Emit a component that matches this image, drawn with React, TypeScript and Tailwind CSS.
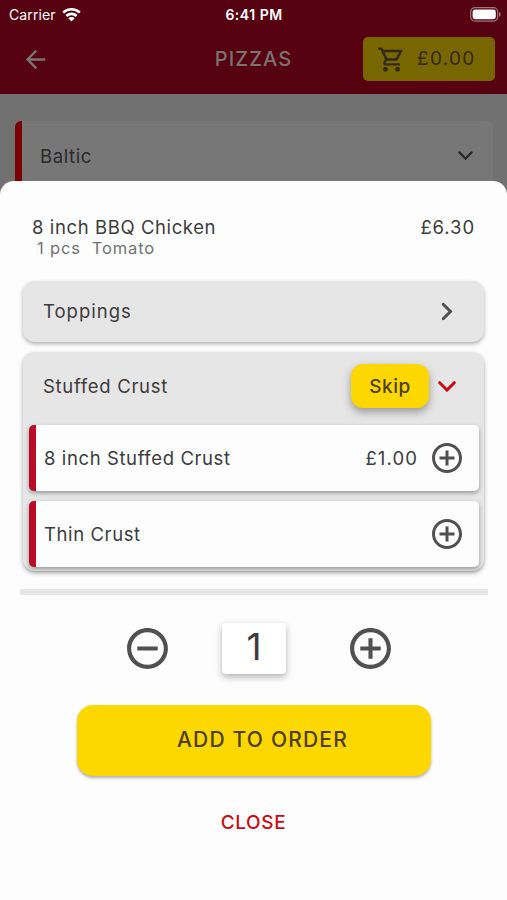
import { useState } from 'react';
import {
  MdArrowBack,
  MdOutlineShoppingCart,
  MdAddCircleOutline,
  MdRemoveCircleOutline,
} from 'react-icons/md';

interface CrustOption {
  name:  string;
  price: string | null;
}

const CRUSTS: CrustOption[] = [
  { name: '8 inch Stuffed Crust', price: '£1.00' },
  { name: 'Thin Crust',           price: null },
];

function StatusBar() {
  return (
    <div className="grid h-7 grid-cols-[1fr_auto_1fr] items-center pl-[9px] pr-[6px] text-white">
      <div className="flex items-center gap-1.5">
        <span className="text-[14px] tracking-[0.1px]">Carrier</span>
        <svg width="19" height="15" viewBox="0 0 19 15" fill="none" stroke="currentColor" strokeWidth="2.6">
          <path d="M1.2 5.6a11.9 11.9 0 0 1 16.6 0" />
          <path d="M4.4 9a7.3 7.3 0 0 1 10.2 0" />
          <path d="M9.5 14.4 6.3 11.2a4.6 4.6 0 0 1 6.4 0z" fill="currentColor" stroke="none" />
        </svg>
      </div>
      <span className="pr-[2px] text-[14px] font-semibold tracking-[0.5px]">6:41 PM</span>
      <svg className="justify-self-end" width="31" height="15" viewBox="0 0 31 15">
        <rect x="0.7" y="0.7" width="27" height="13.4" rx="4.2" fill="none" stroke="#fff" strokeOpacity="0.45" strokeWidth="1.2" />
        <rect x="2.6" y="2.6" width="23.2" height="9.6" rx="2.4" fill="#fff" />
        <path d="M29 5v5c1.1-.4 1.7-1.4 1.7-2.5S30.1 5.4 29 5z" fill="#fff" fillOpacity="0.45" />
      </svg>
    </div>
  );
}

function Chevron({ className }: { className: string }) {
  return (
    <svg className={className} viewBox="0 0 18 11" fill="none" stroke="currentColor" strokeLinecap="round">
      <path d="M1.7 1.7 9 9 16.3 1.7" />
    </svg>
  );
}

export default function App() {
  const [qty, setQty] = useState(1);

  return (
    <div className="flex h-[900px] w-[507px] flex-col overflow-hidden bg-[#717171] font-['Inter','Liberation_Sans',sans-serif] text-[#3c3c3c]">
      {/* header */}
      <header className="h-[94px] shrink-0 bg-[#560210]">
        <StatusBar />
        <div className="grid grid-cols-[1fr_auto_1fr] items-center pl-[21px] pr-3 pt-[9px]">
          <MdArrowBack className="size-[29px] text-[#7b7370]" />
          <h1 className="pr-[9px] text-[20px] font-medium tracking-[1.1px] text-[#7b7370]">PIZZAS</h1>
          <div className="flex h-[44px] w-[132px] items-center gap-[11px] justify-self-end rounded-[5px] bg-[#786700] pl-[14px] text-[#33291a]">
            <MdOutlineShoppingCart className="size-[29px]" />
            <span className="pt-px text-[19px] tracking-[1.3px]">£0.00</span>
          </div>
        </div>
      </header>

      {/* menu list behind the sheet */}
      <div className="h-[87px] shrink-0 pl-[15px] pr-[14px] pt-[27px]">
        <div className="flex h-[70px] items-center justify-between rounded-[6px] border-l-[7px] border-[#7a0004] bg-[#777777] pl-[18px] pr-5 text-[#2a2a2a]">
          <span className="pt-0.5 text-[18.5px] tracking-[0.6px]">Baltic</span>
          <Chevron className="w-[15px] stroke-[2.8]" />
        </div>
      </div>

      {/* sheet */}
      <main className="z-10 flex-1 rounded-t-[14px] bg-[#fdfdfd] px-[23px] pt-[34px]">
        <div className="flex justify-between px-[9px] text-[18.5px] leading-6">
          <div>
            <p className="tracking-[0.6px]">8 inch BBQ Chicken</p>
            <p className="whitespace-pre pl-[5px] text-[16.5px] leading-[19px] tracking-[0.85px] text-[#727272]">1 pcs  Tomato</p>
          </div>
          <p className="tracking-[0.9px]">£6.30</p>
        </div>

        <div className="mt-[23px] flex h-[61px] items-center justify-between rounded-[12px] bg-[#e6e6e6] pl-5 pr-[28px] shadow-[0_2px_4px_rgba(0,0,0,0.3)]">
          <span className="text-[18.5px] tracking-[1px]">Toppings</span>
          <Chevron className="w-[18px] -rotate-90 stroke-[3] text-[#505050]" />
        </div>

        <section className="mt-[10px] h-[219px] rounded-[12px] bg-[#e6e6e6] shadow-[0_2px_4px_rgba(0,0,0,0.35)]">
          <div className="flex h-[73px] items-center pl-5 pr-[28px] pb-[5px]">
            <span className="flex-1 pt-0.5 text-[18.5px] tracking-[0.7px]">Stuffed Crust</span>
            <button className="h-[44px] w-[78px] rounded-[12px] bg-[#fdd700] pt-0.5 text-[19px] font-medium tracking-[0.5px] text-[#4c3f18] shadow-[0_4px_8px_rgba(0,0,0,0.35)]">
              Skip
            </button>
            <Chevron className="ml-[9px] w-[18px] stroke-[3] text-[#cb0a12]" />
          </div>
          <div className="space-y-[10px] pl-[6px] pr-[5px]">
            {CRUSTS.map(c => (
              <div
                key={c.name}
                className="flex h-[66px] items-center rounded-[5px] border-l-[7px] border-[#b90c26] bg-[#fdfdfd] pl-2 pr-[14px] shadow-[0_2px_4px_rgba(0,0,0,0.35)]"
              >
                <span className="flex-1 pt-0.5 text-[18.5px] tracking-[0.6px]">{c.name}</span>
                {c.price && <span className="mr-[11px] pt-0.5 text-[18.5px] tracking-[1.1px]">{c.price}</span>}
                <MdAddCircleOutline className="size-[36px] text-[#505050]" />
              </div>
            ))}
          </div>
        </section>

        <div className="-ml-[3px] -mr-1 mt-[18px] h-[6px] bg-[#e6e6e6]" />

        {/* quantity */}
        <div className="mt-[28px] flex items-center gap-[50px] pl-[100px]">
          <button onClick={() => setQty(q => Math.max(1, q - 1))}>
            <MdRemoveCircleOutline className="size-[49px] text-[#505050]" />
          </button>
          <span className="h-[51px] w-[64px] rounded-[4px] bg-white text-center text-[37px] leading-[48px] shadow-[0_3px_7px_rgba(0,0,0,0.3)]">
            {qty}
          </span>
          <button className="ml-[10px]" onClick={() => setQty(q => q + 1)}>
            <MdAddCircleOutline className="size-[49px] text-[#505050]" />
          </button>
        </div>

        <button className="mx-auto mt-[31px] block h-[71px] w-[354px] rounded-[16px] bg-[#fdd700] pb-[2px] pl-[18px] text-[21px] font-medium tracking-[1.2px] text-[#4c3f18] shadow-[0_2px_3px_rgba(0,0,0,0.3)]">
          ADD TO ORDER
        </button>
        <button className="mx-auto mt-[35px] block text-[19px] font-medium leading-6 tracking-[0.6px] text-[#cb0a12]">CLOSE</button>
      </main>
    </div>
  );
}
